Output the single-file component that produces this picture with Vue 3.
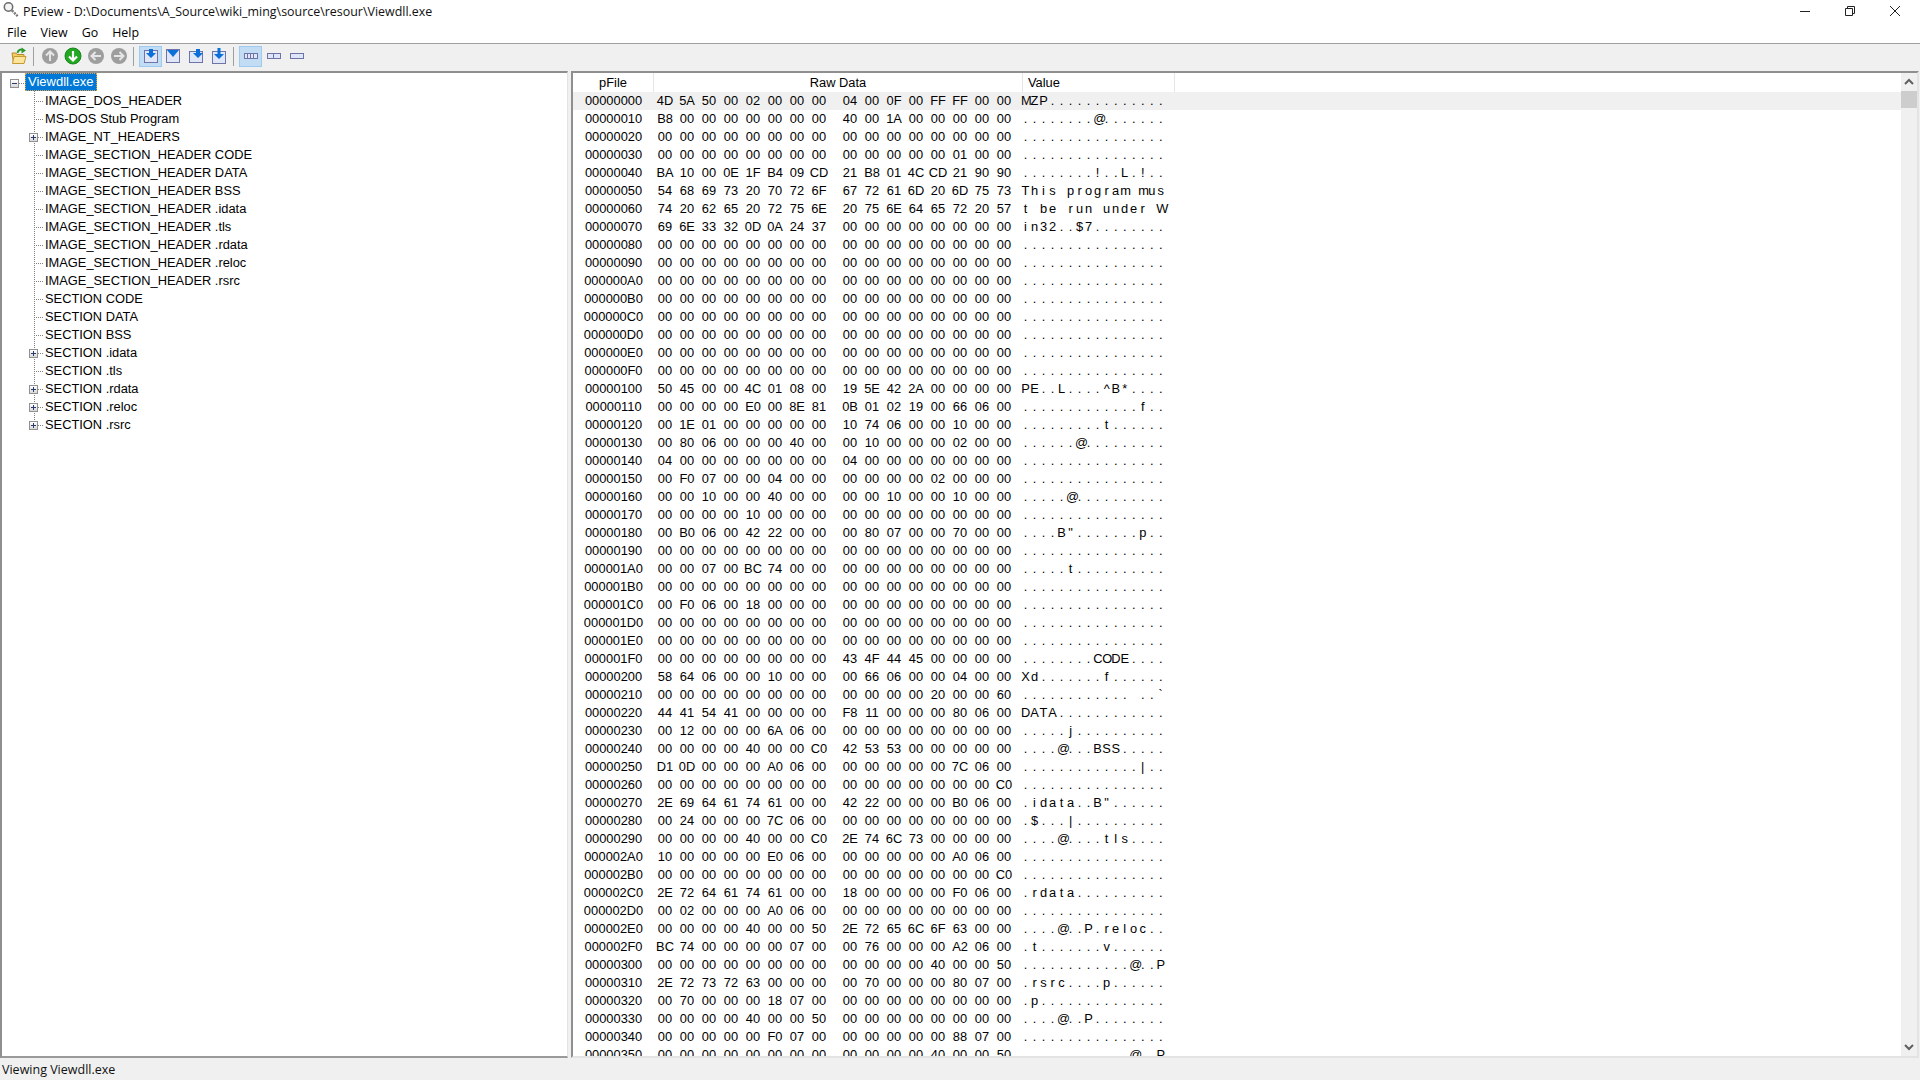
<script setup>
const z = (n) => Array(n).fill('00').join(' ')
const dump = [
  '4D 5A 50 00 02 00 00 00 04 00 0F 00 FF FF 00 00',
  'B8 00 00 00 00 00 00 00 40 00 1A 00 00 00 00 00',
  z(16),
  '00 00 00 00 00 00 00 00 00 00 00 00 00 01 00 00',
  'BA 10 00 0E 1F B4 09 CD 21 B8 01 4C CD 21 90 90',
  '54 68 69 73 20 70 72 6F 67 72 61 6D 20 6D 75 73',
  '74 20 62 65 20 72 75 6E 20 75 6E 64 65 72 20 57',
  '69 6E 33 32 0D 0A 24 37 00 00 00 00 00 00 00 00',
  z(16), z(16), z(16), z(16), z(16), z(16), z(16), z(16),
  '50 45 00 00 4C 01 08 00 19 5E 42 2A 00 00 00 00',
  '00 00 00 00 E0 00 8E 81 0B 01 02 19 00 66 06 00',
  '00 1E 01 00 00 00 00 00 10 74 06 00 00 10 00 00',
  '00 80 06 00 00 00 40 00 00 10 00 00 00 02 00 00',
  '04 00 00 00 00 00 00 00 04 00 00 00 00 00 00 00',
  '00 F0 07 00 00 04 00 00 00 00 00 00 02 00 00 00',
  '00 00 10 00 00 40 00 00 00 00 10 00 00 10 00 00',
  '00 00 00 00 10 00 00 00 00 00 00 00 00 00 00 00',
  '00 B0 06 00 42 22 00 00 00 80 07 00 00 70 00 00',
  z(16),
  '00 00 07 00 BC 74 00 00 00 00 00 00 00 00 00 00',
  z(16),
  '00 F0 06 00 18 00 00 00 00 00 00 00 00 00 00 00',
  z(16), z(16),
  '00 00 00 00 00 00 00 00 43 4F 44 45 00 00 00 00',
  '58 64 06 00 00 10 00 00 00 66 06 00 00 04 00 00',
  '00 00 00 00 00 00 00 00 00 00 00 00 20 00 00 60',
  '44 41 54 41 00 00 00 00 F8 11 00 00 00 80 06 00',
  '00 12 00 00 00 6A 06 00 00 00 00 00 00 00 00 00',
  '00 00 00 00 40 00 00 C0 42 53 53 00 00 00 00 00',
  'D1 0D 00 00 00 A0 06 00 00 00 00 00 00 7C 06 00',
  '00 00 00 00 00 00 00 00 00 00 00 00 00 00 00 C0',
  '2E 69 64 61 74 61 00 00 42 22 00 00 00 B0 06 00',
  '00 24 00 00 00 7C 06 00 00 00 00 00 00 00 00 00',
  '00 00 00 00 40 00 00 C0 2E 74 6C 73 00 00 00 00',
  '10 00 00 00 00 E0 06 00 00 00 00 00 00 A0 06 00',
  '00 00 00 00 00 00 00 00 00 00 00 00 00 00 00 C0',
  '2E 72 64 61 74 61 00 00 18 00 00 00 00 F0 06 00',
  '00 02 00 00 00 A0 06 00 00 00 00 00 00 00 00 00',
  '00 00 00 00 40 00 00 50 2E 72 65 6C 6F 63 00 00',
  'BC 74 00 00 00 00 07 00 00 76 00 00 00 A2 06 00',
  '00 00 00 00 00 00 00 00 00 00 00 00 40 00 00 50',
  '2E 72 73 72 63 00 00 00 00 70 00 00 00 80 07 00',
  '00 70 00 00 00 18 07 00 00 00 00 00 00 00 00 00',
  '00 00 00 00 40 00 00 50 00 00 00 00 00 00 00 00',
  '00 00 00 00 00 F0 07 00 00 00 00 00 00 88 07 00',
  '00 00 00 00 00 00 00 00 00 00 00 00 40 00 00 50',
]
const rows = dump.map((line, i) => {
  const bytes = line.split(' ')
  return {
    offset: (i * 16).toString(16).toUpperCase().padStart(8, '0'),
    left: bytes.slice(0, 8),
    right: bytes.slice(8),
    chars: bytes.map((b) => {
      const c = parseInt(b, 16)
      return c >= 32 && c < 127 ? String.fromCharCode(c) : '.'
    }),
  }
})
const tree = [
  ['IMAGE_DOS_HEADER', false], ['MS-DOS Stub Program', false], ['IMAGE_NT_HEADERS', true],
  ['IMAGE_SECTION_HEADER CODE', false], ['IMAGE_SECTION_HEADER DATA', false], ['IMAGE_SECTION_HEADER BSS', false],
  ['IMAGE_SECTION_HEADER .idata', false], ['IMAGE_SECTION_HEADER .tls', false], ['IMAGE_SECTION_HEADER .rdata', false],
  ['IMAGE_SECTION_HEADER .reloc', false], ['IMAGE_SECTION_HEADER .rsrc', false], ['SECTION CODE', false],
  ['SECTION DATA', false], ['SECTION BSS', false], ['SECTION .idata', true], ['SECTION .tls', false],
  ['SECTION .rdata', true], ['SECTION .reloc', true], ['SECTION .rsrc', true],
].map(([label, plus]) => ({ label, plus }))
const menus = ['File', 'View', 'Go', 'Help']
</script>

<template>
  <div class="window">
    <header class="titlebar">
      <svg class="appicon" width="17" height="17" viewBox="0 0 17 17">
        <circle cx="6.5" cy="6" r="4.2" fill="#f4f4f4" stroke="#6a6a6a" stroke-width="1.5" />
        <path d="M10 9.5 L16 15.5" stroke="#777" stroke-width="2.4" stroke-dasharray="2 1" />
      </svg>
      <span class="title">PEview - D:\Documents\A_Source\wiki_ming\source\resour\Viewdll.exe</span>
      <div class="controls">
        <svg width="12" height="12" viewBox="0 0 12 12"><path d="M1 6.5H11" stroke="#222" /></svg>
        <svg width="12" height="12" viewBox="0 0 12 12"><path d="M3.5 3V1.5H10.5V8.5H8.5M1.5 3.5H8.5V10.5H1.5Z" fill="none" stroke="#222" /></svg>
        <svg width="12" height="12" viewBox="0 0 12 12"><path d="M1 1L11 11M11 1L1 11" stroke="#222" /></svg>
      </div>
    </header>

    <nav class="menubar">
      <span v-for="m in menus" :key="m" class="menu">{{ m }}</span>
    </nav>

    <div class="toolbar">
      <svg class="tool folder" width="16" height="18" viewBox="0 0 16 18">
        <path d="M1 6H5L6 7.5H13V16H2.5Z" fill="#f3cc62" stroke="#b98e2c" />
        <path d="M3 9.5H15L13 16.5H1.5Z" fill="#fbe59a" stroke="#c39a34" />
        <path d="M6.5 6C7 3 9.5 2 12 3" fill="none" stroke="#2a9a2a" stroke-width="2" />
        <path d="M10.5 0.5L15 3.5L10.5 6.5Z" fill="#2a9a2a" />
      </svg>
      <i class="sep first"></i>
      <svg class="tool r1" width="18" height="18" viewBox="0 0 18 18">
        <circle cx="9" cy="9" r="8" fill="#9e9e9e" />
        <path d="M9 14V5M5 8.5L9 4.5L13 8.5" fill="none" stroke="#e6e6e6" stroke-width="2" />
      </svg>
      <svg class="tool r2" width="18" height="18" viewBox="0 0 18 18">
        <circle cx="9" cy="9" r="8" fill="#22a822" stroke="#15861a" />
        <path d="M9 4V13M5 9.5L9 13.5L13 9.5" fill="none" stroke="#fff" stroke-width="2.2" />
      </svg>
      <svg class="tool r3" width="18" height="18" viewBox="0 0 18 18">
        <circle cx="9" cy="9" r="8" fill="#9e9e9e" />
        <path d="M14 9H5M8.5 5L4.5 9L8.5 13" fill="none" stroke="#e6e6e6" stroke-width="2" />
      </svg>
      <svg class="tool r4" width="18" height="18" viewBox="0 0 18 18">
        <circle cx="9" cy="9" r="8" fill="#9e9e9e" />
        <path d="M4 9H13M9.5 5L13.5 9L9.5 13" fill="none" stroke="#e6e6e6" stroke-width="2" />
      </svg>
      <i class="sep second"></i>
      <span class="btn on b1">
        <svg width="14" height="14" viewBox="0 0 14 14">
          <rect x="0.5" y="1.5" width="13" height="12" fill="#dfe6f8" stroke="#6f74a8" />
          <path d="M5 0H9V4H12L7 9L2 4H5Z" fill="#0a6fd8" />
        </svg>
      </span>
      <svg class="tool b2" width="14" height="14" viewBox="0 0 14 14">
        <rect x="0.5" y="0.5" width="13" height="13" fill="#dfe6f8" stroke="#6f74a8" />
        <path d="M1 1H13L7 8Z" fill="#0a6fd8" />
      </svg>
      <svg class="tool b3" width="14" height="14" viewBox="0 0 14 14">
        <rect x="0.5" y="2.5" width="13" height="11" fill="#dfe6f8" stroke="#6f74a8" />
        <path d="M7 0H11V4H14L9 9L4 4H7Z" fill="#0a6fd8" />
      </svg>
      <svg class="tool b4" width="14" height="16" viewBox="0 0 14 16">
        <rect x="0.5" y="3.5" width="13" height="12" fill="#dfe6f8" stroke="#6f74a8" />
        <path d="M5.5 0H8.5V6H12L7 11L2 6H5.5Z" fill="#0a6fd8" />
      </svg>
      <i class="sep third"></i>
      <span class="btn on b5">
        <svg width="14" height="6" viewBox="0 0 14 6">
          <rect x="0.5" y="0.5" width="13" height="5" fill="#dfe6f8" stroke="#6f74a8" />
          <path d="M3.5 1V5M6.5 1V5M9.5 1V5" stroke="#6f74a8" />
        </svg>
      </span>
      <svg class="tool b6" width="14" height="6" viewBox="0 0 14 6">
        <rect x="0.5" y="0.5" width="13" height="5" fill="#dfe6f8" stroke="#6f74a8" />
        <path d="M6.5 1V5" stroke="#6f74a8" />
      </svg>
      <svg class="tool b7" width="14" height="6" viewBox="0 0 14 6">
        <rect x="0.5" y="0.5" width="13" height="5" fill="#dfe6f8" stroke="#6f74a8" />
      </svg>
    </div>

    <main class="panes">
      <aside class="treepane">
        <div class="treerow root">
          <span class="box rootbox"><i class="h"></i></span>
          <i class="hdots rootdots"></i>
          <span class="selected">Viewdll.exe</span>
        </div>
        <div
          v-for="(n, i) in tree"
          :key="n.label"
          class="treerow child"
        >
          <i class="vdots" :class="{ last: i === tree.length - 1 }"></i>
          <i class="hdots"></i>
          <span v-if="n.plus" class="box"><i class="h"></i><i class="v"></i></span>
          <span class="label">{{ n.label }}</span>
        </div>
      </aside>

      <section class="hexpane">
        <div class="hexview">
          <div class="head">
            <span class="hfile">pFile</span>
            <span class="hraw">Raw Data</span>
            <span class="hval">Value</span>
          </div>
          <div class="rows">
            <div v-for="(r, i) in rows" :key="r.offset" class="row" :class="{ current: i === 0 }">
              <span class="off">{{ r.offset }}</span>
              <span v-for="(b, j) in r.left" :key="j" class="byte">{{ b }}</span>
              <span class="mid"></span>
              <span v-for="(b, j) in r.right" :key="'r' + j" class="byte">{{ b }}</span>
              <span class="ascii"><span v-for="(c, j) in r.chars" :key="j">{{ c }}</span></span>
            </div>
          </div>
        </div>
        <div class="scroll">
          <svg width="16" height="18" viewBox="0 0 16 18"><path d="M4 11L8 7L12 11" fill="none" stroke="#606060" stroke-width="2" /></svg>
          <div class="thumb"></div>
          <div class="track"></div>
          <svg width="16" height="18" viewBox="0 0 16 18"><path d="M4 7L8 11L12 7" fill="none" stroke="#606060" stroke-width="2" /></svg>
        </div>
      </section>
    </main>

    <footer class="status">Viewing Viewdll.exe</footer>
  </div>
</template>

<style>
html, body { margin: 0; background: #f0f0f0; }
</style>

<style scoped>
.window {
  width: 1920px;
  height: 1080px;
  display: flex;
  flex-direction: column;
  overflow: hidden;
  background: #f0f0f0;
  color: #000;
  font: 12.85px "Liberation Sans", Arial, sans-serif;
}
.titlebar {
  height: 22px;
  background: #fff;
  display: flex;
  align-items: center;
  padding-left: 2px;
}
.appicon { margin-right: 4px; margin-top: -3px; }
.title, .menu, .status { font-family: "Open Sans", "Liberation Sans", sans-serif; }
.title { color: #111; font-size: 12.45px; }
.menu { font-size: 12.4px; margin-right: 14px; }
.controls {
  margin-left: auto;
  display: flex;
  gap: 33px;
  padding-right: 19px;
  margin-top: -1px;
}
.menubar {
  height: 21px;
  background: #fff;
  display: flex;
  align-items: center;
  padding-left: 7px;
}
.toolbar {
  box-sizing: border-box;
  height: 28px;
  border-top: 1px solid #a0a0a0;
  display: flex;
  align-items: center;
  padding: 0 0 3px 11px;
}
.sep { width: 1px; height: 19px; background: #a0a0a0; flex: none; }
.tool { flex: none; }
.first { margin-left: 6px; }
.r1 { margin-left: 7px; }
.r2 { margin-left: 5px; }
.r3 { margin-left: 5px; }
.r4 { margin-left: 5px; }
.second { margin-left: 5px; }
.btn {
  flex: none;
  display: flex;
  align-items: center;
  justify-content: center;
  box-sizing: border-box;
  background: #c2dcf3;
  border: 1px solid #9dcaf0;
  width: 23px;
  height: 21px;
}
.b1 { margin-left: 5px; }
.b2 { margin-left: 4px; }
.b3 { margin-left: 9px; }
.b4 { margin-left: 9px; }
.third { margin-left: 7px; }
.b5 { margin-left: 5px; }
.b6 { margin-left: 5px; }
.b7 { margin-left: 9px; }

.panes {
  flex: 1;
  min-height: 0;
  display: flex;
  gap: 3px;
  padding-right: 1px;
}
.treepane {
  width: 568px;
  box-sizing: border-box;
  background: #fff;
  border: 1px solid #a0a0a0;
  border-left: 2px solid #8f8f8f;
  border-top: 2px solid #8f8f8f;
  border-right-color: #e3e3e3;
  border-bottom: 2px solid #9a9a9a;
  overflow: hidden;
}
.treerow {
  position: relative;
  height: 18px;
  line-height: 18px;
  white-space: nowrap;
}
.label { position: absolute; left: 43px; top: 1px; }
.selected {
  position: absolute;
  left: 23px;
  top: 0;
  height: 18px;
  box-sizing: border-box;
  padding: 0 3px;
  line-height: 18px;
  font-size: 13px;
  background: #0078d7;
  color: #fff;
  outline: 1px dotted #e8a040;
  outline-offset: -1px;
}
.vdots {
  position: absolute;
  left: 32px;
  top: 0;
  bottom: 0;
  width: 1px;
  background: repeating-linear-gradient(to bottom, #808080 0 1px, transparent 1px 2px);
}
.vdots.last { bottom: 8px; }
.hdots {
  position: absolute;
  left: 32px;
  top: 10px;
  width: 10px;
  height: 1px;
  background: repeating-linear-gradient(to right, #808080 0 1px, transparent 1px 2px);
}
.rootdots { left: 17px; width: 6px; }
.box {
  position: absolute;
  left: 27px;
  top: 6px;
  width: 9px;
  height: 9px;
  box-sizing: border-box;
  border: 1px solid #919191;
  background: linear-gradient(#fff, #d8d8d8);
}
.rootbox { left: 8px; }
.box .h { position: absolute; left: 1px; top: 3px; width: 5px; height: 1px; background: #2b3a6a; }
.box .v { position: absolute; left: 3px; top: 1px; width: 1px; height: 5px; background: #2b3a6a; }

.hexpane {
  flex: 1;
  min-width: 0;
  box-sizing: border-box;
  display: flex;
  background: #fff;
  border: 2px solid #e3e3e3;
  border-left-color: #8f8f8f;
  border-top-color: #8f8f8f;
}
.hexview { flex: 1; min-width: 0; overflow: hidden; }
.head {
  height: 19px;
  line-height: 20px;
  display: flex;
}
.hfile { width: 80px; text-align: center; border-right: 1px solid #e5e5e5; }
.hraw { width: 368px; text-align: center; border-right: 1px solid #e5e5e5; }
.hval { width: 152px; padding-left: 5px; box-sizing: border-box; border-right: 1px solid #e5e5e5; }
.row {
  height: 18px;
  line-height: 18px;
  display: flex;
  white-space: nowrap;
}
.row.current { background: #f0f0f0; }
.off { width: 81px; text-align: center; flex: none; }
.byte { width: 22px; text-align: center; flex: none; }
.mid { width: 9px; flex: none; }
.ascii { display: flex; margin-left: 6px; }
.ascii span { width: 9.03px; text-align: center; flex: none; }
.scroll {
  width: 16px;
  flex: none;
  display: flex;
  flex-direction: column;
  background: #f0f0f0;
}
.scroll svg { flex: none; }
.thumb { height: 17px; background: #cdcdcd; flex: none; }
.track { flex: 1; }
.status {
  height: 22px;
  line-height: 24px;
  padding-left: 2px;
  color: #111;
  font-size: 12.5px;
}
</style>
